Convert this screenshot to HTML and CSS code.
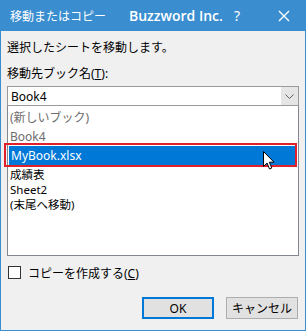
FILE: index.html
```html
<!DOCTYPE html>
<html lang="ja">
<head>
    <meta charset="UTF-8">
    <title>移動またはコピー</title>
    <link rel="stylesheet" href="styles.css">
</head>
<body>
    <div class="window">
        <div class="titlebar">
            <span class="title">移動またはコピー</span>
            <span class="brand">Buzzword Inc.</span>
            <span class="help">?<svg class="xicon" width="12" height="12" viewBox="0 0 12 12"><path d="M1 1 L11 11 M11 1 L1 11" stroke="#ffffff" stroke-width="1.4" fill="none"/></svg></span>
        </div>

        <div class="content">
            <p class="msg">選択したシートを移動します。</p>
            <p class="label">移動先ブック名(<u>T</u>):</p>

            <div class="combo">
                <span class="combo-text">Book4</span>
                <span class="combo-btn">
                    <svg width="9" height="5" viewBox="0 0 9 5">
                        <path d="M0.5 0.5 L4.5 4.5 L8.5 0.5" stroke="#606060" fill="none"/>
                    </svg>
                </span>
            </div>

            <div class="listbox">
                <div class="dropdown">
                    <div class="drop-item dim">(新しいブック)</div>
                    <div class="drop-item dim">Book4</div>
                    <div class="drop-item selected">MyBook.xlsx</div>
                </div>
                <div class="item">成績表</div>
                <div class="item">Sheet2</div>
                <div class="item">(末尾へ移動)</div>
            </div>

            <div class="check-row">
                <span class="checkbox"></span>
                <span>コピーを作成する(<u>C</u>)</span>
            </div>

            <div class="buttons">
                <button class="btn btn-default">OK</button>
                <button class="btn">キャンセル</button>
            </div>
        </div>

        <!-- annotation box around the chosen book -->
        <div class="mark"></div>

        <svg class="pointer" width="13" height="20" viewBox="0 0 13 20">
            <path d="M0.5 0.5 L0.5 15.5 L4 12 L6.5 18 L8.8 17 L6.3 11.2 L11 11.2 Z" fill="#fff" stroke="#000" stroke-width="1" stroke-linejoin="round"/>
        </svg>
    </div>
</body>
</html>
```

FILE: styles.css
```css
* {
    box-sizing: border-box;
}
body {
    margin: 0;
    font-family: "Noto Sans", "Noto Sans CJK JP", sans-serif;
    font-size: 12px;
    color: #000;
}
.window {
    position: relative;
    width: 306px;
    height: 331px;
    border: 1px solid #3a8ed0;
    border-top: none;
    background-color: #f0f0f0;
    overflow: hidden;
}
.titlebar {
    display: flex;
    align-items: center;
    height: 31px;
    background-color: #3a8ed0;
    color: #fff;
    padding: 0 0 0 9px;
}
.title {
    font-family: "Noto Sans CJK JP", sans-serif;
    font-size: 12px;
    width: 119px;
    flex: none;
}
.brand {
    font-family: "Open Sans", "Noto Sans", sans-serif;
    font-weight: 600;
    font-size: 14px;
    width: 105px;
    flex: none;
}
.help {
    display: flex;
    align-items: center;
    font-family: "Noto Sans", sans-serif;
    font-size: 14px;
    flex: none;
}
.xicon {
    display: block;
    margin-left: 38px;
}
.content {
    padding: 8px 6px 0 6px;
}
.msg {
    margin: 0;
    line-height: 18px;
}
.label {
    margin: 9px 0 0 0;
    line-height: 16px;
}
.combo {
    display: flex;
    align-items: center;
    height: 20px;
    margin-top: 4px;
    background-color: #fff;
    border: 1px solid #9a9a9a;
}
.combo-text {
    flex: 1;
    padding-left: 3px;
}
.combo-btn {
    display: flex;
    align-items: center;
    justify-content: center;
    width: 17px;
    height: 18px;
    background-color: #e5e5e5;
}
.listbox {
    height: 150px;
    background-color: #fff;
    border: 1px solid #828790;
    border-top: none;
}
.dropdown {
    padding-top: 2px;
    border-bottom: 1px solid #b0b0b0;
    margin-right: 3px;
}
.drop-item {
    height: 19px;
    line-height: 19px;
    padding-left: 2px;
}
.dim {
    color: #6d6d6d;
}
.selected {
    background-color: #0078d7;
    color: #fff;
    margin: 0 0 1px 1px;
}
.item {
    height: 15px;
    line-height: 15px;
    font-size: 11.5px;
    padding-left: 2px;
}
.check-row {
    display: flex;
    align-items: center;
    gap: 7px;
    margin-top: 8px;
    padding-left: 1px;
    height: 17px;
}
.checkbox {
    width: 13px;
    height: 13px;
    border: 1px solid #333;
    background-color: #fff;
}
.buttons {
    display: flex;
    justify-content: flex-end;
    gap: 12px;
    margin-top: 16px;
    padding-right: 1px;
}
.btn {
    width: 72px;
    height: 22px;
    padding: 0;
    font-family: "Noto Sans", "Noto Sans CJK JP", sans-serif;
    font-size: 12px;
    background-color: #e1e1e1;
    border: 1px solid #adadad;
}
.btn-default {
    border: 2px solid #0078d7;
}
.mark {
    position: absolute;
    left: 3px;
    top: 143px;
    width: 293px;
    height: 24px;
    border: 2px solid #e0202a;
}
.pointer {
    position: absolute;
    left: 262px;
    top: 151px;
}
```
